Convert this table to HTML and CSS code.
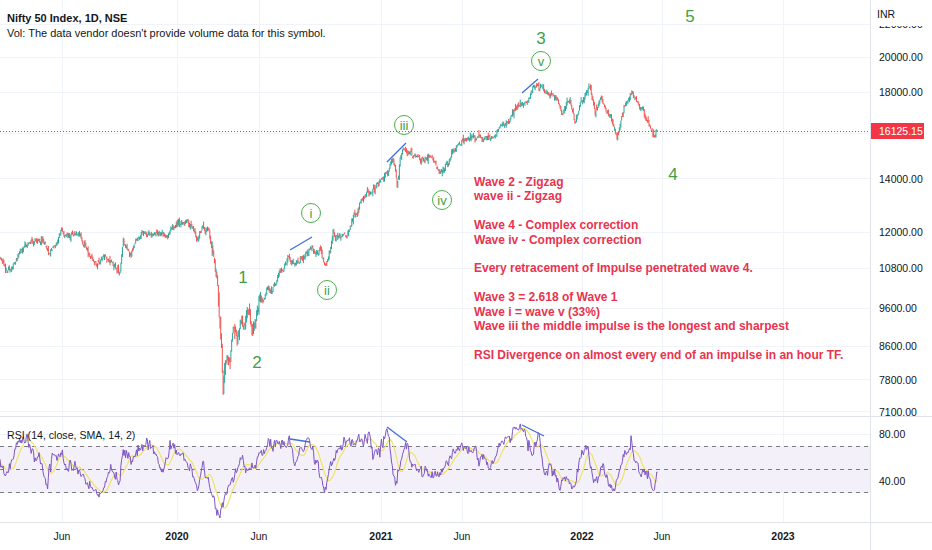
FILE: index.html
```html
<!DOCTYPE html>
<html lang="en">
<head>
<meta charset="utf-8">
<title>Nifty 50 Index, 1D, NSE</title>
<link rel="stylesheet" href="styles.css">
</head>
<body>
<div class="app">
  <div class="main">
    <div class="pane pane-price">
      <svg class="chart" viewBox="0 0 870 416" width="870" height="416">
        <g class="grid">
          <line x1="0" x2="870" y1="24.5" y2="24.5"/>
          <line x1="0" x2="870" y1="57.5" y2="57.5"/>
          <line x1="0" x2="870" y1="92.5" y2="92.5"/>
          <line x1="0" x2="870" y1="133.5" y2="133.5"/>
          <line x1="0" x2="870" y1="178.5" y2="178.5"/>
          <line x1="0" x2="870" y1="232.5" y2="232.5"/>
          <line x1="0" x2="870" y1="268.5" y2="268.5"/>
          <line x1="0" x2="870" y1="308.5" y2="308.5"/>
          <line x1="0" x2="870" y1="346.5" y2="346.5"/>
          <line x1="0" x2="870" y1="379.5" y2="379.5"/>
          <line x1="0" x2="870" y1="411.5" y2="411.5"/>
          <line x1="62.5" x2="62.5" y1="0" y2="416"/>
          <line x1="177.5" x2="177.5" y1="0" y2="416"/>
          <line x1="259.5" x2="259.5" y1="0" y2="416"/>
          <line x1="381.5" x2="381.5" y1="0" y2="416"/>
          <line x1="462.5" x2="462.5" y1="0" y2="416"/>
          <line x1="582.5" x2="582.5" y1="0" y2="416"/>
          <line x1="662.5" x2="662.5" y1="0" y2="416"/>
          <line x1="783.5" x2="783.5" y1="0" y2="416"/>
        </g>
        <line class="last-price" x1="0" x2="870" y1="131.5" y2="131.5"/>
        <g id="candles"></g>
        <g class="div-lines">
          <line x1="290" y1="250" x2="312" y2="237"/>
          <line x1="387" y1="162" x2="406" y2="143"/>
          <line x1="522" y1="93" x2="538" y2="79"/>
        </g>
        <g class="waves">
          <text x="690" y="16">5</text>
          <text x="541" y="38">3</text>
          <text x="673" y="174">4</text>
          <text x="243" y="277">1</text>
          <text x="257" y="362">2</text>
        </g>
        <g class="subwaves">
          <circle cx="311" cy="213" r="9.5"/><text x="311" y="213">i</text>
          <circle cx="327" cy="290" r="9.5"/><text x="327" y="290">ii</text>
          <circle cx="404" cy="125" r="9.5"/><text x="404" y="125">iii</text>
          <circle cx="442" cy="200" r="9.5"/><text x="442" y="200">iv</text>
          <circle cx="541" cy="61" r="9.5"/><text x="541" y="61">v</text>
        </g>
      </svg>
      <div class="legend">
        <div class="legend-title">Nifty 50 Index, 1D, NSE</div>
        <div class="legend-line">Vol: The data vendor doesn't provide volume data for this symbol.</div>
      </div>
      <div class="note">
        <div class="note-group">
          <div class="note-line">Wave 2 - Zigzag</div>
          <div class="note-line">wave ii - Zigzag</div>
        </div>
        <div class="note-group">
          <div class="note-line">Wave 4 - Complex correction</div>
          <div class="note-line">Wave iv - Complex correction</div>
        </div>
        <div class="note-group">
          <div class="note-line">Every retracement of Impulse penetrated wave 4.</div>
        </div>
        <div class="note-group">
          <div class="note-line">Wave 3 = 2.618 of Wave 1</div>
          <div class="note-line">Wave i = wave v (33%)</div>
          <div class="note-line">Wave iii the middle impulse is the longest and sharpest</div>
        </div>
        <div class="note-group">
          <div class="note-line">RSI Divergence on almost every end of an impulse in an hour TF.</div>
        </div>
      </div>
    </div>
    <div class="pane pane-rsi">
      <svg class="chart" viewBox="0 417 870 105" width="870" height="105">
        <rect class="band" x="0" y="446" width="870" height="47"/>
        <g class="grid">
          <line x1="0" x2="870" y1="434.5" y2="434.5"/>
          <line x1="0" x2="870" y1="481.5" y2="481.5"/>
          <line x1="62.5" x2="62.5" y1="417" y2="522"/>
          <line x1="177.5" x2="177.5" y1="417" y2="522"/>
          <line x1="259.5" x2="259.5" y1="417" y2="522"/>
          <line x1="381.5" x2="381.5" y1="417" y2="522"/>
          <line x1="462.5" x2="462.5" y1="417" y2="522"/>
          <line x1="582.5" x2="582.5" y1="417" y2="522"/>
          <line x1="662.5" x2="662.5" y1="417" y2="522"/>
          <line x1="783.5" x2="783.5" y1="417" y2="522"/>
        </g>
        <g class="levels">
          <line x1="0" x2="870" y1="446.5" y2="446.5"/>
          <line x1="0" x2="870" y1="469.5" y2="469.5"/>
          <line x1="0" x2="870" y1="492.5" y2="492.5"/>
        </g>
        <g id="rsi"></g>
        <g class="div-lines">
          <line x1="290" y1="439" x2="310" y2="442"/>
          <line x1="387" y1="427" x2="407" y2="442"/>
          <line x1="522" y1="425" x2="544" y2="436"/>
        </g>
      </svg>
      <div class="rsi-legend">RSI (14, close, SMA, 14, 2)</div>
    </div>
    <div class="time-axis">
      <span class="tl" style="left:62px">Jun</span>
      <span class="tl year" style="left:177px">2020</span>
      <span class="tl" style="left:259px">Jun</span>
      <span class="tl year" style="left:381px">2021</span>
      <span class="tl" style="left:462px">Jun</span>
      <span class="tl year" style="left:582px">2022</span>
      <span class="tl" style="left:662px">Jun</span>
      <span class="tl year" style="left:783px">2023</span>
    </div>
  </div>
  <div class="axis">
    <div class="scale scale-price">
      <div class="unit">INR</div>
      <div class="cut-label"><span class="cut-text">22000.00</span></div>
      <span class="pl" style="top:57px">20000.00</span>
      <span class="pl" style="top:92px">18000.00</span>
      <span class="pl" style="top:179px">14000.00</span>
      <span class="pl" style="top:232px">12000.00</span>
      <span class="pl" style="top:268px">10800.00</span>
      <span class="pl" style="top:308px">9600.00</span>
      <span class="pl" style="top:346px">8600.00</span>
      <span class="pl" style="top:380px">7800.00</span>
      <span class="pl" style="top:412px">7100.00</span>
      <div class="badge">16125.15</div>
    </div>
    <div class="scale scale-rsi">
      <span class="pl" style="top:17px">80.00</span>
      <span class="pl" style="top:64px">40.00</span>
    </div>
    <div class="corner"></div>
  </div>
</div>
<script src="script.js"></script>
</body>
</html>
```

FILE: styles.css
```css
html, body {
  margin: 0;
  padding: 0;
  background: #ffffff;
}
body {
  width: 932px;
  height: 550px;
  overflow: hidden;
  font-family: "Liberation Sans", Arial, sans-serif;
  color: #131722;
}
.app {
  display: flex;
  width: 932px;
  height: 550px;
}
.main {
  width: 870px;
  display: flex;
  flex-direction: column;
}
.axis {
  width: 61px;
  border-left: 1px solid #e0e3eb;
  display: flex;
  flex-direction: column;
}
.pane {
  position: relative;
  overflow: hidden;
  border-bottom: 1px solid #e0e3eb;
}
.pane-price { height: 416px; }
.pane-rsi { height: 105px; }
.time-axis {
  position: relative;
  height: 27px;
}
.chart {
  display: block;
}
.grid line {
  stroke: #f0f3fa;
  stroke-width: 1;
}
.last-price {
  stroke: #f23645;
  stroke-width: 1;
  stroke-dasharray: 1 2;
}
.div-lines line {
  stroke: #3f6fde;
  stroke-width: 1.3;
}
.waves text {
  font-family: "Liberation Sans", Arial, sans-serif;
  font-size: 17px;
  fill: #43a047;
  text-anchor: middle;
  dominant-baseline: central;
}
.subwaves circle {
  fill: none;
  stroke: #4caf50;
  stroke-width: 1;
}
.subwaves text {
  font-family: "Liberation Sans", Arial, sans-serif;
  font-size: 13px;
  fill: #43a047;
  text-anchor: middle;
  dominant-baseline: central;
}
.band {
  fill: #f3f0fa;
}
.levels line {
  stroke: #787b86;
  stroke-width: 1;
  stroke-dasharray: 4 4;
}
.candle-up {
  stroke: #26a69a;
  stroke-width: 1;
  fill: none;
}
.candle-down {
  stroke: #ef5350;
  stroke-width: 1;
  fill: none;
}
.rsi-line {
  fill: none;
  stroke: #7e57c2;
  stroke-width: 1;
}
.rsi-ma {
  fill: none;
  stroke: #efe364;
  stroke-width: 1.2;
}
.legend {
  position: absolute;
  left: 7px;
  top: 11px;
  font-size: 11px;
  line-height: 15px;
  color: #131722;
}
.legend-title {
  font-weight: bold;
}
.note {
  position: absolute;
  left: 474px;
  top: 175px;
  display: flex;
  flex-direction: column;
  align-items: flex-start;
  gap: 14.4px;
  font-size: 12px;
  line-height: 14.4px;
  font-weight: bold;
  color: #e8344e;
}
.note-group {
  display: flex;
  flex-direction: column;
  align-items: flex-start;
}
.note-line {
  white-space: nowrap;
}
.rsi-legend {
  position: absolute;
  left: 7px;
  top: 11px;
  font-size: 10.6px;
  line-height: 15px;
  color: #131722;
}
.tl {
  position: absolute;
  top: 0;
  line-height: 27px;
  font-size: 10.5px;
  color: #131722;
  transform: translateX(-50%);
}
.tl.year {
  font-weight: bold;
}
.scale {
  position: relative;
  overflow: hidden;
  border-bottom: 1px solid #e0e3eb;
}
.scale-price { height: 416px; }
.scale-rsi { height: 105px; }
.corner { height: 27px; }
.pl {
  position: absolute;
  left: 8px;
  font-size: 10.5px;
  line-height: 14px;
  color: #131722;
  transform: translateY(-50%);
  white-space: nowrap;
}
.unit {
  position: absolute;
  left: 0;
  top: 0;
  width: 100%;
  height: 26px;
  padding: 7px 0 0 6px;
  box-sizing: border-box;
  font-size: 10.5px;
  line-height: 14px;
  color: #131722;
}
.cut-label {
  position: absolute;
  left: 8px;
  top: 26px;
  height: 6px;
  width: 50px;
  overflow: hidden;
}
.cut-text {
  display: block;
  margin-top: -9px;
  font-size: 10.5px;
  line-height: 14px;
  color: #131722;
  white-space: nowrap;
}
.badge {
  position: absolute;
  left: 0;
  top: 123px;
  width: 53px;
  height: 16px;
  padding-left: 8px;
  box-sizing: border-box;
  background: #f23645;
  color: #ffffff;
  font-size: 10.5px;
  line-height: 16px;
}
```

FILE: script.js
```js
(function () {
  var NS = "http://www.w3.org/2000/svg";
  var seed = 20220527;
  function rnd() {
    seed = (seed * 1664525 + 1013904223) >>> 0;
    return seed / 4294967296;
  }
  function gauss() {
    var u = rnd() || 1e-9, v = rnd();
    return Math.sqrt(-2 * Math.log(u)) * Math.cos(2 * Math.PI * v);
  }
  function interp(pts, x) {
    for (var i = 1; i < pts.length; i++) {
      if (x <= pts[i][0]) {
        var a = pts[i - 1], b = pts[i];
        var t = (x - a[0]) / ((b[0] - a[0]) || 1);
        return a[1] + (b[1] - a[1]) * t;
      }
    }
    return pts[pts.length - 1][1];
  }
  var PRICE = [[0,258],[7,273],[15,262],[25,247],[33,242],[43,240],[50,257],[53,248],[62,232],[70,236],[80,233],[83,243],[90,255],[97,267],[103,258],[107,260],[113,263],[120,270],[123,243],[130,255],[137,240],[143,233],[150,236],[160,233],[167,235],[173,225],[180,226],[187,222],[193,228],[197,242],[203,227],[208,230],[213,250],[217,273],[218,293],[220,320],[222,360],[223,390],[225,375],[227,353],[230,367],[233,327],[236,340],[240,320],[244,325],[247,313],[250,322],[253,333],[256,320],[260,297],[264,300],[267,287],[272,292],[277,280],[283,270],[287,262],[290,260],[295,262],[300,257],[306,252],[312,247],[316,253],[320,250],[325,267],[330,250],[333,233],[340,236],[347,235],[350,228],[355,215],[360,203],[367,195],[373,190],[380,182],[387,173],[393,160],[395,166],[397,187],[400,160],[403,147],[408,152],[413,153],[418,158],[423,160],[428,158],[433,160],[437,168],[440,173],[447,163],[452,155],[457,147],[462,142],[467,138],[473,137],[480,137],[487,136],[493,138],[500,127],[505,124],[510,120],[517,105],[522,103],[527,100],[532,92],[538,82],[542,88],[547,93],[552,95],[557,97],[562,113],[566,106],[570,100],[575,123],[580,105],[585,96],[590,87],[595,113],[600,98],[606,108],[612,117],[617,140],[620,125],[623,113],[628,100],[633,92],[638,103],[642,108],[647,117],[650,127],[653,137],[655,135],[658,127]];
  var RSI = [[0,460],[5,480],[10,467],[17,447],[23,437],[28,442],[33,450],[40,460],[47,487],[53,460],[62,452],[67,467],[77,467],[87,480],[97,498],[103,487],[110,470],[120,482],[123,453],[133,457],[147,443],[157,453],[163,472],[170,447],[182,458],[192,470],[197,490],[203,465],[210,487],[220,510],[223,500],[230,483],[237,467],[243,460],[253,470],[260,453],[270,447],[280,443],[290,442],[295,463],[300,450],[310,443],[317,463],[325,490],[330,463],[340,447],[352,437],[360,443],[370,435],[373,460],[387,432],[395,482],[407,443],[413,468],[427,475],[437,477],[447,463],[460,450],[470,447],[480,457],[490,470],[498,447],[505,437],[513,430],[522,428],[527,440],[532,457],[538,437],[545,473],[552,465],[560,490],[567,475],[573,490],[582,453],[588,445],[593,482],[603,468],[613,490],[622,463],[632,447],[640,475],[647,473],[653,495],[658,475]];

  var STEP = 0.78, END = 658;
  var n = Math.floor(END / STEP) + 1;
  var up = "", down = "", noise = 0, prevClose = interp(PRICE, 0);
  var i, x;
  for (i = 0; i < n; i++) {
    x = i * STEP;
    var crash = x > 212 && x < 262;
    var vol = crash ? 5 : 2.2;
    noise = noise * 0.55 + gauss() * (crash ? 3.5 : 1.6);
    var close = interp(PRICE, x) + noise;
    var open = prevClose + gauss() * 0.5 * vol;
    var hi = Math.min(open, close) - Math.abs(gauss()) * vol * 0.6;
    var lo = Math.max(open, close) + Math.abs(gauss()) * vol * 0.6;
    if (lo - hi < 1.2) { lo = hi + 1.2; }
    var seg = "M" + x.toFixed(2) + " " + hi.toFixed(1) + "V" + lo.toFixed(1);
    if (close <= open) { up += seg; } else { down += seg; }
    prevClose = close;
  }
  var g = document.getElementById("candles");
  var pu = document.createElementNS(NS, "path");
  pu.setAttribute("class", "candle-up");
  pu.setAttribute("d", up);
  var pd = document.createElementNS(NS, "path");
  pd.setAttribute("class", "candle-down");
  pd.setAttribute("d", down);
  g.appendChild(pu);
  g.appendChild(pd);

  var rv = [], rn = 0;
  for (i = 0; i < n; i++) {
    x = i * STEP;
    rn = rn * 0.45 + gauss() * 3.2;
    var y = interp(RSI, x) + rn;
    if (y < 421) y = 421;
    if (y > 518) y = 518;
    rv.push(y);
  }
  var line = [], ma = [];
  for (i = 0; i < n; i++) {
    x = (i * STEP).toFixed(2);
    line.push(x + "," + rv[i].toFixed(1));
    var s = 0, c = 0;
    for (var k = Math.max(0, i - 13); k <= i; k++) { s += rv[k]; c++; }
    ma.push(x + "," + (s / c).toFixed(1));
  }
  var rg = document.getElementById("rsi");
  var pm = document.createElementNS(NS, "polyline");
  pm.setAttribute("class", "rsi-ma");
  pm.setAttribute("points", ma.join(" "));
  var pr = document.createElementNS(NS, "polyline");
  pr.setAttribute("class", "rsi-line");
  pr.setAttribute("points", line.join(" "));
  rg.appendChild(pm);
  rg.appendChild(pr);
})();
```
